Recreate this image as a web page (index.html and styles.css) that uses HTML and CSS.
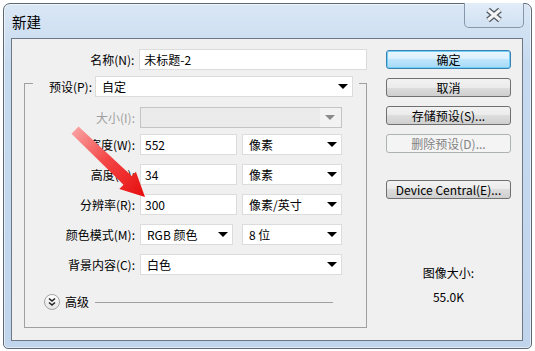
FILE: index.html
```html
<!doctype html>
<html>
  <head>
    <meta charset="utf-8">
    <link rel="stylesheet" href="styles.css">
  </head>
  <body>
    <div class="window">
      <div class="titlebar">
        <span class="title">新建</span>
        <div class="close">
          <svg width="20" height="16" viewBox="0 0 20 16">
            <path d="M4 3 L16 13 M16 3 L4 13" stroke="#4f5760" stroke-width="5.6" fill="none"/>
            <path d="M4 3 L16 13 M16 3 L4 13" stroke="#f4f4f4" stroke-width="3.2" fill="none"/>
          </svg>
        </div>
      </div>
      <div class="client">
        <div class="main">
          <div class="row">
            <label class="lbl lbl-name">名称(N):</label>
            <div class="field name-field">未标题-2</div>
          </div>

          <div class="group">
            <div class="group-head">
              <label class="lbl lbl-preset">预设(P):</label>
              <div class="select preset-select">自定<span class="caret"></span></div>
            </div>

            <div class="row row-size">
              <label class="lbl disabled">大小(I):</label>
              <div class="select select-off size-select"><span class="caret-box"><span class="caret"></span></span></div>
            </div>
            <div class="row row-gap">
              <label class="lbl">宽度(W):</label>
              <div class="field num-field">552</div>
              <div class="select unit-select">像素<span class="caret"></span></div>
            </div>
            <div class="row">
              <label class="lbl">高度(H):</label>
              <div class="field num-field">34</div>
              <div class="select unit-select">像素<span class="caret"></span></div>
            </div>
            <div class="row">
              <label class="lbl">分辨率(R):</label>
              <div class="field num-field">300</div>
              <div class="select unit-select">像素/英寸<span class="caret"></span></div>
            </div>
            <div class="row">
              <label class="lbl">颜色模式(M):</label>
              <div class="select mode-select">RGB 颜色<span class="caret"></span></div>
              <div class="select unit-select">8 位<span class="caret"></span></div>
            </div>
            <div class="row">
              <label class="lbl">背景内容(C):</label>
              <div class="select bg-select">白色<span class="caret"></span></div>
            </div>

            <div class="adv">
              <span class="adv-btn">
                <svg width="14" height="14" viewBox="0 0 14 14">
                  <path d="M4 3.5 L7 6 L10 3.5 M4 7.5 L7 10 L10 7.5" stroke="#222" stroke-width="1.6" fill="none"/>
                </svg>
              </span>
              <span class="adv-text">高级</span>
              <span class="adv-line"></span>
            </div>
          </div>
        </div>

        <div class="side">
          <div class="btn btn-default">确定</div>
          <div class="btn">取消</div>
          <div class="btn">存储预设(S)...</div>
          <div class="btn btn-off">删除预设(D)...</div>
          <div class="btn btn-device">Device Central(E)...</div>
          <div class="img-size">图像大小:</div>
          <div class="img-value">55.0K</div>
        </div>
      </div>
    </div>

    <svg class="arrow" width="535" height="351" viewBox="0 0 535 351">
      <defs>
        <linearGradient id="arrowFill" gradientUnits="userSpaceOnUse" x1="74" y1="130" x2="145" y2="197">
          <stop offset="0" stop-color="#f9a0a0"/>
          <stop offset="0.45" stop-color="#f44646"/>
          <stop offset="1" stop-color="#e60c0c"/>
        </linearGradient>
      </defs>
      <polygon points="78.5,126.5 131.7,176.1 135.9,171.7 145,197 119.3,189.1 123.5,184.7 71.5,133.7" fill="url(#arrowFill)"/>
    </svg>
  </body>
</html>
```

FILE: styles.css
```css
body {
  margin: 0;
  background: #fff;
  font-family: "Noto Sans CJK SC", "Noto Sans", sans-serif;
  font-size: 12px;
  color: #000;
}
.window {
  box-sizing: border-box;
  width: 529px;
  height: 346px;
  margin: 3px 0 0 3px;
  padding: 0 8px 7px 7px;
  border: 1px solid #5d6874;
  border-radius: 7px 7px 5px 5px;
  background: linear-gradient(#dae7f5, #c6daef 60px, #c0d5ec);
  box-shadow: inset 0 0 0 1px rgba(255, 255, 255, 0.55);
  display: flex;
  flex-direction: column;
}
.titlebar {
  height: 34px;
  display: flex;
  justify-content: space-between;
  align-items: flex-start;
}
.title {
  font-size: 14.5px;
  line-height: 20px;
  padding: 8px 0 0 1px;
}
.close {
  box-sizing: border-box;
  width: 60px;
  height: 25px;
  margin: -1px -1px 0 0;
  border: 1px solid #8797aa;
  border-top: none;
  border-radius: 0 0 5px 5px;
  background: linear-gradient(#e2edf8, #d0e0f1);
  display: flex;
  align-items: center;
  justify-content: center;
}
.client {
  flex: 1;
  border: 1px solid #6d7886;
  background: #f0f0f0;
  display: flex;
}
.main {
  width: 343px;
  padding: 10px 0 0 12px;
}
.row {
  display: flex;
  align-items: center;
}
.lbl {
  width: 110px;
  margin-right: 5px;
  text-align: right;
  line-height: 16px;
  white-space: nowrap;
}
.lbl-name {
  width: 111px;
}
.lbl-preset {
  width: 59px;
  margin-right: 3px;
}
.disabled {
  color: #a0a0a0;
}
.field, .select {
  box-sizing: border-box;
  height: 21px;
  line-height: 19px;
  padding: 0 4px;
  background: #fff;
  border: 1px solid #dcdcdc;
  white-space: nowrap;
}
.select {
  position: relative;
  padding-left: 6px;
}
.caret {
  position: absolute;
  right: 4px;
  top: 7px;
  border-left: 5px solid transparent;
  border-right: 5px solid transparent;
  border-top: 5px solid #000;
}
.name-field {
  width: 229px;
}
.group {
  margin-top: 13px;
  padding-bottom: 17px;
  border: 1px solid #a0a0a0;
}
.group-head {
  display: flex;
  align-items: center;
  margin: -8px 7px 0 8px;
  background: #f0f0f0;
}
.preset-select {
  width: 258px;
}
.row-size {
  margin-top: 10px;
}
.group .row + .row {
  margin-top: 9px;
}
.group .row-size + .row-gap {
  margin-top: 6px;
}
.size-select {
  width: 202px;
  background: #ebebeb;
  border-color: #c4c4c4;
}
.caret-box {
  position: absolute;
  right: 0;
  top: 0;
  bottom: 0;
  width: 21px;
  background: #f2f2f2;
}
.caret-box .caret {
  right: 6px;
  border-top-color: #8a8a8a;
}
.num-field {
  width: 97px;
}
.unit-select {
  width: 100px;
  margin-left: 5px;
}
.mode-select {
  width: 93px;
  margin-right: 4px;
}
.bg-select {
  width: 202px;
}
.adv {
  display: flex;
  align-items: center;
  margin: 19px 33px 0 19px;
  line-height: 16px;
}
.adv-btn {
  box-sizing: border-box;
  width: 16px;
  height: 16px;
  border: 1px solid #a4a4a4;
  border-radius: 50%;
  background: linear-gradient(#ffffff, #e4e4e4);
  display: flex;
  align-items: center;
  justify-content: center;
}
.adv-text {
  margin-left: 5px;
}
.adv-line {
  flex: 1;
  height: 1px;
  margin-left: 6px;
  background: #a0a0a0;
}
.side {
  width: 125px;
  margin-left: 19px;
  padding-top: 11px;
  display: flex;
  flex-direction: column;
}
.btn {
  box-sizing: border-box;
  height: 19px;
  margin-bottom: 9px;
  border: 1px solid #707070;
  border-radius: 3px;
  background: linear-gradient(#f2f2f2 0, #ebebeb 50%, #dddddd 50%, #cfcfcf 100%);
  text-align: center;
  line-height: 17px;
  white-space: nowrap;
}
.btn-default {
  border-color: #3c7fb1;
  background: linear-gradient(#eaf6fd 0, #d9f0fc 50%, #bee6fd 50%, #a7d9f5 100%);
  box-shadow: inset 0 0 0 1px #6fd0f8;
}
.btn-off {
  border-color: #adb2b5;
  background: #f4f4f4;
  color: #838383;
}
.btn-device {
  margin-top: 18px;
}
.img-size {
  margin-top: 57px;
  text-align: center;
  line-height: 16px;
}
.img-value {
  margin-top: 8px;
  text-align: center;
  line-height: 16px;
}
.arrow {
  position: absolute;
  left: 0;
  top: 0;
  pointer-events: none;
}
```
